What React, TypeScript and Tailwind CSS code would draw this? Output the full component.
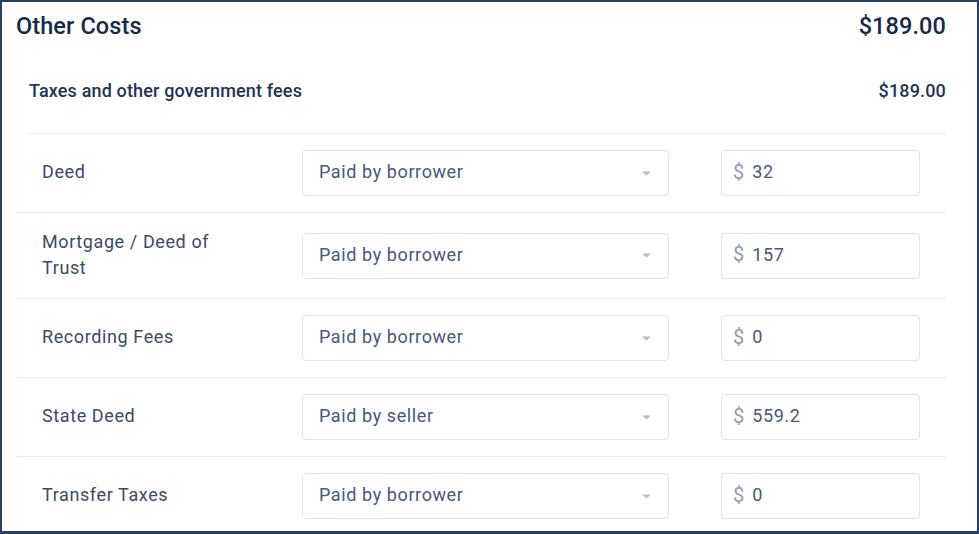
import React from 'react';

interface CostRow {
  id: string;
  label: string;
  payer: string;
  amount: string;
}

const ROWS: CostRow[] = [
  { id: 'deed', label: 'Deed', payer: 'Paid by borrower', amount: '32' },
  { id: 'mortgage', label: 'Mortgage / Deed of Trust', payer: 'Paid by borrower', amount: '157' },
  { id: 'recording', label: 'Recording Fees', payer: 'Paid by borrower', amount: '0' },
  { id: 'stateDeed', label: 'State Deed', payer: 'Paid by seller', amount: '559.2' },
  { id: 'transfer', label: 'Transfer Taxes', payer: 'Paid by borrower', amount: '0' },
];

function Caret() {
  return (
    <svg width="9" height="5" viewBox="0 0 9 5" className="shrink-0">
      <path d="M0 0.5h9L4.5 4.5z" fill="#b6bec9" />
    </svg>
  );
}

export default function App() {
  return (
    <div
      className="w-[979px] h-[534px] overflow-hidden bg-white border-2 border-b-[3px] border-[#2b3e69]"
      style={{ fontFamily: 'Roboto, "Liberation Sans", sans-serif' }}
    >
      {/* Header */}
      <div className="flex items-center justify-between h-[46px] pt-[4px] pl-[14px] pr-[31px]">
        <h2 className="text-[23.5px] font-medium tracking-[0.1px] text-[#172a48]">Other Costs</h2>
        <span className="text-[23.5px] font-medium tracking-[0.1px] text-[#172a48]">$189.00</span>
      </div>

      {/* Section header */}
      <div className="pl-[27px] pr-[31px]">
        <div className="flex items-center justify-between h-[86px] border-b border-[#e9ecf0]">
          <span className="text-[18px] font-medium tracking-[0.15px] text-[#1f3454]">Taxes and other government fees</span>
          <span className="text-[18px] font-medium tracking-[0.15px] text-[#1f3454]">$189.00</span>
        </div>
      </div>

      {/* Rows */}
      <div className="pl-[14px] pr-[31px]">
        {ROWS.map((row, idx) => (
          <div
            key={row.id}
            className={`flex items-center py-4 ${idx < ROWS.length - 1 ? 'border-b border-[#e9ecf0]' : ''}`}
          >
            <div className="w-[286px] shrink-0 pl-[26px] pr-[70px] pb-[2px] text-[18px] leading-[25.5px] tracking-[0.6px] text-[#3b4b66]">
              {row.label}
            </div>
            <div className="w-[367px] h-[46px] shrink-0 flex items-center justify-between pl-[16px] pr-[17px] border border-[#dfe3ea] rounded-[4px]">
              <span className="pb-[3px] text-[18px] tracking-[0.6px] text-[#47587a]">{row.payer}</span>
              <Caret />
            </div>
            <div className="ml-[52px] w-[199px] h-[46px] shrink-0 flex items-center pl-[11px] border border-[#dfe3ea] rounded-[4px]">
              <span className="pb-[3px] text-[20px] text-[#8e9db5] mr-[8px]">$</span>
              <span className="pb-[3px] text-[18px] tracking-[0.6px] text-[#47587a]">{row.amount}</span>
            </div>
          </div>
        ))}
      </div>
    </div>
  );
}
